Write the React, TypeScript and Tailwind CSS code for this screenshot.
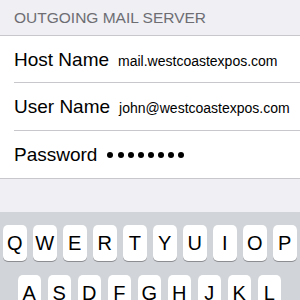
import React from "react";

const row1 = ["Q", "W", "E", "R", "T", "Y", "U", "I", "O", "P"];
const row2 = ["A", "S", "D", "F", "G", "H", "J", "K", "L"];

function Key({ k }: { k: string }) {
  return (
    <div className="w-[23.5px] h-[36px] shrink-0 rounded-[5px] bg-white shadow-[0_1px_0_#8b8d91] flex items-center justify-center text-[20px] text-black leading-none">
      {k}
    </div>
  );
}

function Row({ label, children, last }: { label: string; children: React.ReactNode; last?: boolean }) {
  return (
    <div className={"pl-[14px] bg-white " + (last ? "h-[47px]" : "")}>
      <div className={"flex items-center gap-[9px] " + (last ? "h-[47px]" : "h-[47px] border-b border-[#c8c7cc]")}>
        <span className="text-[19px] text-black leading-none">{label}</span>
        {children}
      </div>
    </div>
  );
}

export default function App() {
  return (
    <div className="w-[300px] h-[300px] overflow-hidden bg-[#efeff4] font-['Liberation_Sans','Helvetica',sans-serif]">
      <div className="h-[35px] pl-[14px] pt-[9px] text-[15.5px] leading-[18px] text-[#6d6d72]">OUTGOING MAIL SERVER</div>
      <div className="border-t border-b border-[#c8c7cc]">
        <Row label="Host Name">
          <span className="text-[14px] leading-none mt-[3px]">mail.westcoastexpos.com</span>
        </Row>
        <div className="pl-[14px] bg-white">
          <div className="flex items-center gap-[9px] h-[48px] border-b border-[#c8c7cc]">
            <span className="text-[19px] text-black leading-none">User Name</span>
            <span className="text-[14px] leading-none mt-[3px]">john@westcoastexpos.com</span>
          </div>
        </div>
        <Row label="Password" last>
          <div className="flex gap-[4.1px] ml-[1px] mt-[1px]">
            {Array.from({ length: 8 }).map((_, i) => (
              <span key={i} className="w-[6px] h-[6px] rounded-full bg-black" />
            ))}
          </div>
        </Row>
      </div>
      <div className="h-[33px]" />
      <div className="bg-[#d1d4d9] h-[100px] pt-[13px]">
        <div className="flex gap-[6.5px] px-[3px]">
          {row1.map((k) => (
            <Key key={k} k={k} />
          ))}
        </div>
        <div className="flex gap-[6.5px] pl-[17.5px] mt-[14px]">
          {row2.map((k) => (
            <Key key={k} k={k} />
          ))}
        </div>
      </div>
    </div>
  );
}
